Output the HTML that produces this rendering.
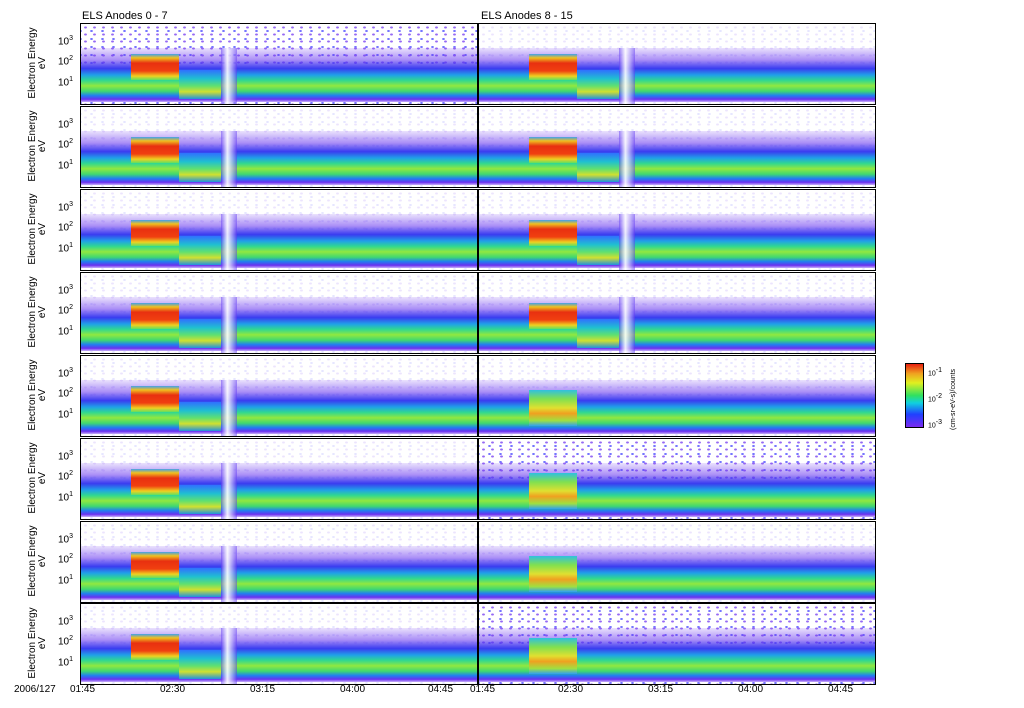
<!DOCTYPE html><html><head><style>
body{margin:0;width:1024px;height:708px;background:#fff;position:relative;overflow:hidden;font-family:"Liberation Sans",sans-serif;color:#000}
.p{position:absolute;width:396px;height:80px;border:1px solid #000;background:#fff;overflow:hidden}
.n{position:absolute;inset:0;background-image:radial-gradient(#6a2cf0 1.2px,transparent 1.6px),radial-gradient(#3b3bff 1.2px,transparent 1.6px);background-size:9px 7px,11px 8px;background-position:0 0,5px 3px}
.b{position:absolute;left:0;right:0;top:30%;bottom:2%;background:linear-gradient(rgba(120,60,240,.15) 0%,rgba(100,50,240,.55) 22%,#3a3cf0 38%,#20a0e8 50%,#30d890 60%,#90e840 70%,#40d870 80%,#2080f0 88%,#6a30f0 95%,rgba(120,60,240,.4) 100%)}
.r{position:absolute;left:50px;width:48px;top:38%;height:32%;background:linear-gradient(#40a0f0,#f0c020 15%,#e83010 35%,#f04010 65%,#f0d020 85%,#60e060)}
.y{position:absolute;left:50px;width:48px;top:42%;height:45%;background:linear-gradient(#30c0e0,#80e050 25%,#e0e030 50%,#f0a020 65%,#a0e040 85%,#30a0f0)}
.d{position:absolute;left:98px;width:42px;top:58%;bottom:6%;background:linear-gradient(#3070ff,#20c0d0 30%,#60e070 55%,#d0e030 75%,#2090e0)}
.g{position:absolute;left:140px;width:16px;top:30%;bottom:0;background:linear-gradient(90deg,rgba(90,50,240,.5),rgba(255,255,255,.9) 40%,rgba(90,50,240,.5))}
.yl{position:absolute;font-size:10px;transform:rotate(-90deg);transform-origin:left top;white-space:nowrap;text-align:center;width:76px;line-height:10px}
.t{position:absolute;font-size:10px}
sup{font-size:7px}
</style></head><body>
<div class="t" style="left:82px;top:10px;font-size:11px">ELS Anodes 0 - 7</div>
<div class="t" style="left:481px;top:10px;font-size:11px">ELS Anodes 8 - 15</div>
<div id="c"></div>
<script>
var h='',tops=[23,106,189,272,355,438,521,603];
for(var i=0;i<8;i++){var y=tops[i];
['80','478'].forEach(function(x,j){
var noisy=(j==0&&i==0)||(j==1&&(i==5||i==7));
h+='<div class="p" style="left:'+x+'px;top:'+y+'px"><div class="n" style="opacity:'+(noisy?.7:.12)+'"></div><div class="b"></div>'+((j==1&&i>=4)?'<div class="y"></div>':'<div class="r"></div><div class="d"></div><div class="g"></div>')+'</div>';});
h+='<div class="yl" style="left:28px;top:'+(y+78)+'px">Electron Energy<br>eV</div>';
h+='<div class="t" style="left:58px;top:'+(y+12)+'px">10<sup>3</sup></div><div class="t" style="left:58px;top:'+(y+32)+'px">10<sup>2</sup></div><div class="t" style="left:58px;top:'+(y+53)+'px">10<sup>1</sup></div>';}
document.getElementById('c').innerHTML=h;
</script>
<div class="t" style="left:14px;top:684px">2006/127</div>
<div class="t" style="left:70px;top:684px">01:45</div>
<div class="t" style="left:160px;top:684px">02:30</div>
<div class="t" style="left:250px;top:684px">03:15</div>
<div class="t" style="left:340px;top:684px">04:00</div>
<div class="t" style="left:428px;top:684px">04:45</div>
<div class="t" style="left:470px;top:684px">01:45</div>
<div class="t" style="left:558px;top:684px">02:30</div>
<div class="t" style="left:648px;top:684px">03:15</div>
<div class="t" style="left:738px;top:684px">04:00</div>
<div class="t" style="left:828px;top:684px">04:45</div>
<div style="position:absolute;left:905px;top:363px;width:17px;height:63px;border:1px solid #000;background:linear-gradient(#e82010,#f0a020 15%,#e0f020 30%,#30e060 50%,#10d0e0 62%,#2040ff 80%,#7a2cf0)"></div>
<div class="t" style="left:928px;top:367px;font-size:7px">10<sup>-1</sup></div>
<div class="t" style="left:928px;top:393px;font-size:7px">10<sup>-2</sup></div>
<div class="t" style="left:928px;top:419px;font-size:7px">10<sup>-3</sup></div>
<div class="t" style="left:950px;top:430px;font-size:7px;transform:rotate(-90deg);transform-origin:left top;white-space:nowrap">(cm-sr-eV-s)/counts</div>
</body></html>
